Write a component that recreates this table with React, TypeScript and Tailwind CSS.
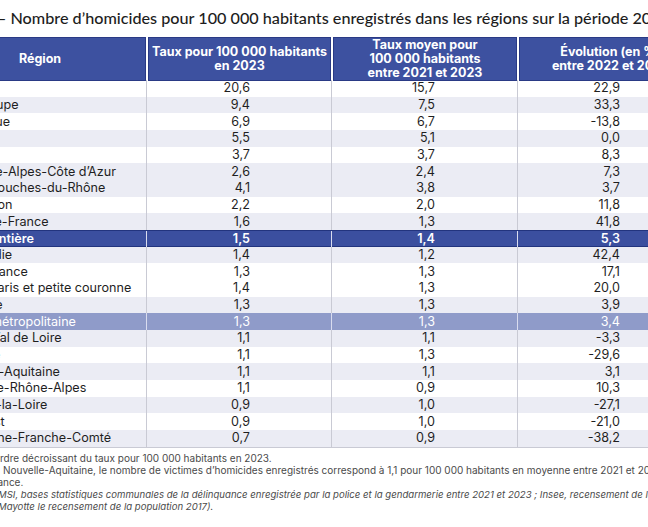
import React from 'react';

type Row = {
  name: string;
  a: string;
  b: string;
  c: string;
  kind?: 'sub' | 'total' | 'metro';
  shade?: boolean;
};

const rows: Row[] = [
  { name: 'Guyane', a: '20,6', b: '15,7', c: '22,9' },
  { name: 'Guadeloupe', a: '9,4', b: '7,5', c: '33,3', shade: true },
  { name: 'Martinique', a: '6,9', b: '6,7', c: '-13,8' },
  { name: 'Mayotte', a: '5,5', b: '5,1', c: '0,0', shade: true },
  { name: 'Corse', a: '3,7', b: '3,7', c: '8,3' },
  { name: 'Provence-Alpes-Côte d’Azur', a: '2,6', b: '2,4', c: '7,3', shade: true },
  { name: 'dont Bouches-du-Rhône', a: '4,1', b: '3,8', c: '3,7', kind: 'sub', shade: true },
  { name: 'La Réunion', a: '2,2', b: '2,0', c: '11,8' },
  { name: 'Hauts-de-France', a: '1,6', b: '1,3', c: '41,8', shade: true },
  { name: 'France entière', a: '1,5', b: '1,4', c: '5,3', kind: 'total' },
  { name: 'Normandie', a: '1,4', b: '1,2', c: '42,4', shade: true },
  { name: 'Île-de-France', a: '1,3', b: '1,3', c: '17,1' },
  { name: 'dont Paris et petite couronne', a: '1,4', b: '1,3', c: '20,0', kind: 'sub' },
  { name: 'Occitanie', a: '1,3', b: '1,3', c: '3,9', shade: true },
  { name: 'France métropolitaine', a: '1,3', b: '1,3', c: '3,4', kind: 'metro' },
  { name: 'Centre-Val de Loire', a: '1,1', b: '1,1', c: '-3,3', shade: true },
  { name: 'Bretagne', a: '1,1', b: '1,3', c: '-29,6' },
  { name: 'Nouvelle-Aquitaine', a: '1,1', b: '1,1', c: '3,1', shade: true },
  { name: 'Auvergne-Rhône-Alpes', a: '1,1', b: '0,9', c: '10,3' },
  { name: 'Pays-de-la-Loire', a: '0,9', b: '1,0', c: '-27,1', shade: true },
  { name: 'Grand Est', a: '0,9', b: '1,0', c: '-21,0' },
  { name: 'Bourgogne-Franche-Comté', a: '0,7', b: '0,9', c: '-38,2', shade: true },
];

const cols = 'grid grid-cols-[212px_185px_186px_185px]';

function TableRow({ row }: { row: Row }) {
  let bg = row.shade ? 'bg-[#ebecf4]' : 'bg-white';
  let text = 'text-[#1f1f1f]';
  let sep = 'border-[#c9cad4]';
  if (row.kind === 'total') {
    bg = 'bg-[#3b4f9f] border-y border-[#22347e]';
    text = 'text-white font-semibold';
    sep = 'border-[#d9dcef]';
  } else if (row.kind === 'metro') {
    bg = 'bg-[#8f9bc9]';
    text = 'text-white';
    sep = 'border-[#d9dcef]';
  }
  return (
    <div className={`${cols} h-[16.68px] items-stretch leading-[16px] ${bg} ${text}`}>
      <div className={`flex items-center whitespace-nowrap ${row.kind === 'sub' ? 'pl-[25px]' : 'pl-[12.5px]'}`}>
        {row.name}
      </div>
      <div className={`flex items-center justify-end pr-[81px] border-l ${sep}`}>{row.a}</div>
      <div className={`flex items-center justify-end pr-[82px] border-l ${sep}`}>{row.b}</div>
      <div className={`flex items-center justify-end pr-[82px] border-l ${sep}`}>{row.c}</div>
    </div>
  );
}

export default function App() {
  return (
    <div className="w-[648px] h-[527px] overflow-hidden bg-white font-['Inter',sans-serif]">
      <div className="h-[37px] flex items-center whitespace-nowrap ml-[-3px] font-['Lato',sans-serif] text-[16.2px] font-medium text-[#1d1d1d]">
        – Nombre d’homicides pour 100 000 habitants enregistrés dans les régions sur la période 2021-2023
      </div>

      <div className="ml-[-66px] w-[768px] text-[12.6px]">
        <div className={`${cols} h-[43px] bg-white text-white font-bold text-[12.5px] leading-[14px]`}>
          <div className="flex items-center justify-center bg-[#3d51a0] border border-[#2a3a85]">Région</div>
          <div className="flex items-center justify-center text-center bg-[#3d51a0] border border-[#2a3a85] ml-[2px]">
            Taux pour 100 000 habitants
            <br />
            en 2023
          </div>
          <div className="flex items-center justify-center text-center bg-[#3d51a0] border border-[#2a3a85] ml-[2px]">
            Taux moyen pour
            <br />
            100 000 habitants
            <br />
            entre 2021 et 2023
          </div>
          <div className="flex items-center justify-center text-center bg-[#3d51a0] border border-[#2a3a85] ml-[2px]">
            Évolution (en %)
            <br />
            entre 2022 et 2023
          </div>
        </div>
        <div className="border-b border-[#c9cad4]">
          {rows.map((r) => (
            <TableRow key={r.name} row={r} />
          ))}
        </div>
      </div>

      <div className="mt-[4px] text-[10px] leading-[12.3px] text-[#4a4a4a] whitespace-nowrap">
        <div className="ml-[-6px]">ordre décroissant du taux pour 100 000 habitants en 2023.</div>
        <div className="ml-[3px]">Nouvelle-Aquitaine, le nombre de victimes d’homicides enregistrés correspond à 1,1 pour 100 000 habitants en moyenne entre 2021 et 2023.</div>
        <div className="ml-[-12px]">France.</div>
        <div className="ml-[-2px] italic text-[9.6px]">MSI, bases statistiques communales de la délinquance enregistrée par la police et la gendarmerie entre 2021 et 2023 ; Insee, recensement de la population 2020 (pour</div>
        <div className="ml-[-2px] italic text-[9.6px]">Mayotte le recensement de la population 2017).</div>
      </div>
    </div>
  );
}
